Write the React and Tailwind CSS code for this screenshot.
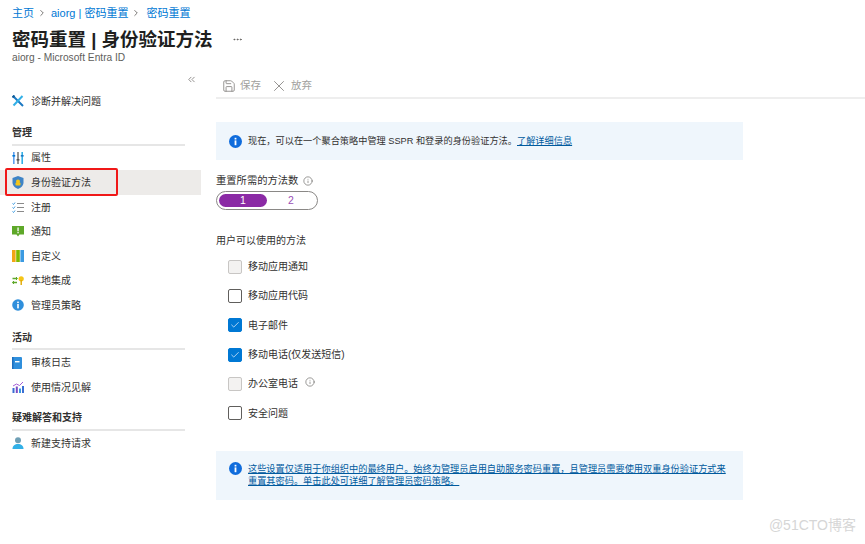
import { ChevronRight, ChevronsLeft, Save, X, Check, Info, Ellipsis } from "lucide-react"

// small coloured menu icons drawn by hand
const DiagIcon = () => (
  <svg width="12" height="12" viewBox="0 0 12 12">
    <path d="M1 1 L11 11" stroke="#1b78c2" strokeWidth="2" />
    <path d="M10.5 1 L1.5 10.5" stroke="#32b0e7" strokeWidth="2" />
    <path d="M0.5 2.5 L2.5 0.5" stroke="#0f5c99" strokeWidth="2" />
  </svg>
)
const PropsIcon = () => (
  <svg width="12" height="12" viewBox="0 0 12 12">
    <rect x="1" y="0" width="1.6" height="12" fill="#5ea0ef" />
    <rect x="5.2" y="0" width="1.6" height="12" fill="#7a7a7a" />
    <rect x="9.4" y="0" width="1.6" height="12" fill="#32b0e7" />
    <rect x="0.4" y="3" width="2.8" height="1.6" fill="#0078d4" />
    <rect x="4.6" y="7" width="2.8" height="1.6" fill="#555" />
    <rect x="8.8" y="3" width="2.8" height="1.6" fill="#1b78c2" />
  </svg>
)
const ShieldIcon = () => (
  <svg width="12" height="13" viewBox="0 0 12 13">
    <path d="M6 0 L11.5 2 V6.5 C11.5 10 8.5 12 6 13 C3.5 12 0.5 10 0.5 6.5 V2 Z" fill="#3f84c6" />
    <circle cx="6" cy="5.5" r="2" fill="#f5c518" />
    <rect x="3.5" y="6.5" width="5" height="3" rx="1" fill="#f5c518" />
  </svg>
)
const RegIcon = () => (
  <svg width="12" height="11" viewBox="0 0 12 11">
    <path d="M0.5 1.5 L1.5 2.5 L3 0.5 M0.5 5.5 L1.5 6.5 L3 4.5 M0.5 9.5 L1.5 10.5 L3 8.5" stroke="#3b9ae1" strokeWidth="1" fill="none" />
    <path d="M5 1.5 H12 M5 5.5 H12 M5 9.5 H12" stroke="#8a8a8a" strokeWidth="1" />
  </svg>
)
const NotifyIcon = () => (
  <svg width="12" height="11" viewBox="0 0 12 11">
    <path d="M0 0 H12 V8.5 H7.5 L6 10.5 L4.5 8.5 H0 Z" fill="#5ea829" />
    <rect x="5.4" y="1.5" width="1.3" height="3.8" fill="#fff" />
    <rect x="5.4" y="6" width="1.3" height="1.3" fill="#fff" />
  </svg>
)
const CustomIcon = () => (
  <svg width="12" height="12" viewBox="0 0 12 12">
    <rect x="0" y="0" width="3.6" height="12" fill="#f2a516" />
    <rect x="4.2" y="0" width="3.6" height="12" fill="#7fba00" />
    <rect x="8.4" y="0" width="3.6" height="12" fill="#3b9ae1" />
  </svg>
)
const OnPremIcon = () => (
  <svg width="12" height="9" viewBox="0 0 12 9">
    <path d="M0.5 2.5 H5 M0.5 6.5 H5" stroke="#5ea829" strokeWidth="1.6" />
    <path d="M4 1 L5.5 2.5 L4 4 M2 5 L0.5 6.5 L2 8" stroke="#5ea829" strokeWidth="1" fill="none" />
    <circle cx="9.2" cy="2.8" r="2.6" fill="#f5c518" />
    <rect x="8.5" y="4" width="1.4" height="5" fill="#e0a800" />
  </svg>
)
const AdminIcon = () => (
  <svg width="12" height="12" viewBox="0 0 12 12">
    <circle cx="6" cy="6" r="5.8" fill="#2f8fdc" />
    <rect x="5.2" y="5" width="1.6" height="4.4" fill="#fff" />
    <rect x="5.2" y="2.6" width="1.6" height="1.5" fill="#fff" />
  </svg>
)
const AuditIcon = () => (
  <svg width="10" height="12" viewBox="0 0 10 12">
    <rect x="0" y="0" width="10" height="12" rx="1" fill="#2f8fdc" />
    <rect x="0" y="0" width="1.5" height="12" fill="#1b6fc0" />
    <rect x="3" y="4" width="4.5" height="1.4" fill="#fff" />
  </svg>
)
const InsightIcon = () => (
  <svg width="12" height="12" viewBox="0 0 12 12">
    <rect x="0.5" y="7" width="2" height="5" fill="#3b6fd4" />
    <rect x="3.8" y="5.5" width="2" height="6.5" fill="#7b4bc4" />
    <rect x="7" y="7.5" width="2" height="4.5" fill="#3b9ae1" />
    <rect x="10" y="5" width="2" height="7" fill="#3b6fd4" />
    <path d="M1 5 L4.5 3 L7.5 4.5 L11 1" stroke="#a55fd6" strokeWidth="1" fill="none" />
  </svg>
)
const SupportIcon = () => (
  <svg width="12" height="12" viewBox="0 0 12 12">
    <circle cx="6" cy="3.2" r="3" fill="#6f9fb5" />
    <path d="M0.5 12 C0.5 8.5 3 7 6 7 C9 7 11.5 8.5 11.5 12 Z" fill="#32b0e7" />
  </svg>
)

function MenuRow({ icon, label, active }) {
  return (
    <div className={`flex items-center h-[24.6px] pl-3 ${active ? "bg-[#edebe9]" : ""}`}>
      <span className="w-[19px] flex items-center shrink-0">{icon}</span>
      <span className="text-[10px] text-[#323130]">{label}</span>
    </div>
  )
}

function SectionHead({ label, className }) {
  return (
    <div className={`ml-3 mr-4 text-[10px] font-semibold text-[#323130] border-b-2 border-[#e6e6e6] ${className}`}>
      {label}
    </div>
  )
}

function MethodCheck({ label, state, info }) {
  let box = "border-[#605e5c] bg-white"
  if (state === "disabled") box = "border-[#c8c6c4] bg-[#f3f2f1]"
  if (state === "checked") box = "border-[#0078d4] bg-[#0078d4]"
  return (
    <div className="flex items-center h-[29.3px] pl-3">
      <span className={`w-[14px] h-[14px] border rounded-[2px] flex items-center justify-center ${box}`}>
        {state === "checked" && <Check size={10} color="#cfe6fa" strokeWidth={2} />}
      </span>
      <span className="ml-[6px] text-[10px] text-[#323130]">{label}</span>
      {info && <Info size={10} color="#605e5c" strokeWidth={1.5} className="ml-[7px] -mt-[3px]" />}
    </div>
  )
}

const BlueInfo = ({ className }) => (
  <svg width="13" height="13" viewBox="0 0 13 13" className={className}>
    <circle cx="6.5" cy="6.5" r="6.5" fill="#0f6cdc" />
    <rect x="5.6" y="5.4" width="1.8" height="4.8" fill="#fff" />
    <rect x="5.6" y="2.8" width="1.8" height="1.7" fill="#fff" />
  </svg>
)

export default function App() {
  return (
    <div
      className="relative w-[865px] h-[544px] overflow-hidden bg-white"
      style={{ fontFamily: '"Liberation Sans", "Noto Sans CJK SC", sans-serif' }}
    >
      {/* header */}
      <div className="pl-3 pt-[6px] h-[74px]">
        <div className="flex items-center text-[11px] text-[#0078d4] h-[14px]">
          <span>主页</span>
          <ChevronRight size={10} color="#605e5c" className="ml-[3px] mr-[4px]" />
          <span>aiorg | 密码重置</span>
          <ChevronRight size={10} color="#605e5c" className="ml-[3px] mr-[5px]" />
          <span>密码重置</span>
        </div>
        <div className="flex items-center h-[25px] mt-[7px]">
          <span className="text-[18.5px] font-semibold text-[#201f1e]">密码重置 | 身份验证方法</span>
          <Ellipsis size={11} color="#605e5c" className="ml-[20px]" />
        </div>
        <div className="text-[10.2px] text-[#605e5c] h-[12px] leading-[12px]">aiorg - Microsoft Entra ID</div>
      </div>

      <div className="flex">
        {/* sidebar */}
        <div className="w-[201px] shrink-0">
          <div className="flex justify-end pr-1 h-[15px]">
            <ChevronsLeft size={11} color="#8a8886" />
          </div>
          <MenuRow icon={<DiagIcon />} label="诊断并解决问题" />
          <SectionHead label="管理" className="mt-[11px] h-[21px]" />
          <MenuRow icon={<PropsIcon />} label="属性" />
          <MenuRow icon={<ShieldIcon />} label="身份验证方法" active />
          <MenuRow icon={<RegIcon />} label="注册" />
          <MenuRow icon={<NotifyIcon />} label="通知" />
          <MenuRow icon={<CustomIcon />} label="自定义" />
          <MenuRow icon={<OnPremIcon />} label="本地集成" />
          <MenuRow icon={<AdminIcon />} label="管理员策略" />
          <SectionHead label="活动" className="mt-[12.5px] h-[20px]" />
          <MenuRow icon={<AuditIcon />} label="审核日志" />
          <MenuRow icon={<InsightIcon />} label="使用情况见解" />
          <SectionHead label="疑难解答和支持" className="mt-[10.5px] h-[21px]" />
          <MenuRow icon={<SupportIcon />} label="新建支持请求" />
        </div>

        {/* main */}
        <div className="flex-1 pl-[15px]">
          <div className="flex items-center h-[25px] border-b-2 border-[#eeeeee] text-[10.5px] text-[#a19f9d]">
            <Save size={14} color="#8a8886" strokeWidth={1.5} className="ml-[6px]" />
            <span className="ml-[4px]">保存</span>
            <X size={18} color="#8a8886" strokeWidth={1.2} className="ml-[9px]" />
            <span className="ml-[3px]">放弃</span>
          </div>

          <div className="w-[527px] h-[38px] mt-[23px] bg-[#eff6fc] flex items-center pl-[13px]">
            <BlueInfo />
            <span className="ml-[6px] pt-[2px] text-[9.2px] text-[#323130]">
              现在，可以在一个聚合策略中管理 SSPR 和登录的身份验证方法。
              <span className="text-[#005a9e] underline">了解详细信息</span>
            </span>
          </div>

          <div className="flex items-center h-[14px] mt-[14px] text-[10.3px] text-[#323130]">
            重置所需的方法数
            <Info size={10} color="#605e5c" strokeWidth={1.5} className="ml-[5px]" />
          </div>
          <div className="w-[102px] h-[19px] mt-[3px] rounded-full border border-[#8a8886] flex items-center px-[2px] text-[10.5px]">
            <span className="w-[48px] h-[13px] rounded-full bg-[#8b2aa5] text-white flex items-center justify-center">1</span>
            <span className="flex-1 text-center text-[#9a4fb5]">2</span>
          </div>

          <div className="h-[14px] mt-[24px] text-[10px] text-[#323130] leading-[14px]">用户可以使用的方法</div>
          <div className="mt-[4px]">
            <MethodCheck label="移动应用通知" state="disabled" />
            <MethodCheck label="移动应用代码" />
            <MethodCheck label="电子邮件" state="checked" />
            <MethodCheck label="移动电话(仅发送短信)" state="checked" />
            <MethodCheck label="办公室电话" state="disabled" info />
            <MethodCheck label="安全问题" />
          </div>

          <div className="w-[527px] h-[49px] mt-[23px] bg-[#eff6fc] flex items-center pl-[13px]">
            <BlueInfo className="shrink-0 -mt-[13px]" />
            <span className="ml-[6px] w-[482px] text-[9.2px] leading-[12.5px] text-[#005a9e] underline">
              这些设置仅适用于你组织中的最终用户。始终为管理员启用自助服务密码重置，且管理员需要使用双重身份验证方式来重置其密码。单击此处可详细了解管理员密码策略。
            </span>
          </div>
        </div>
      </div>

      {/* annotation box */}
      <div className="absolute left-[5px] top-[168px] w-[113px] h-[28px] border-2 border-[#f01818] rounded-[2px]" />
      {/* watermark */}
      <div className="absolute right-[9px] bottom-[8px] text-[14px] text-[#d6d6d6]">@51CTO博客</div>
    </div>
  )
}
